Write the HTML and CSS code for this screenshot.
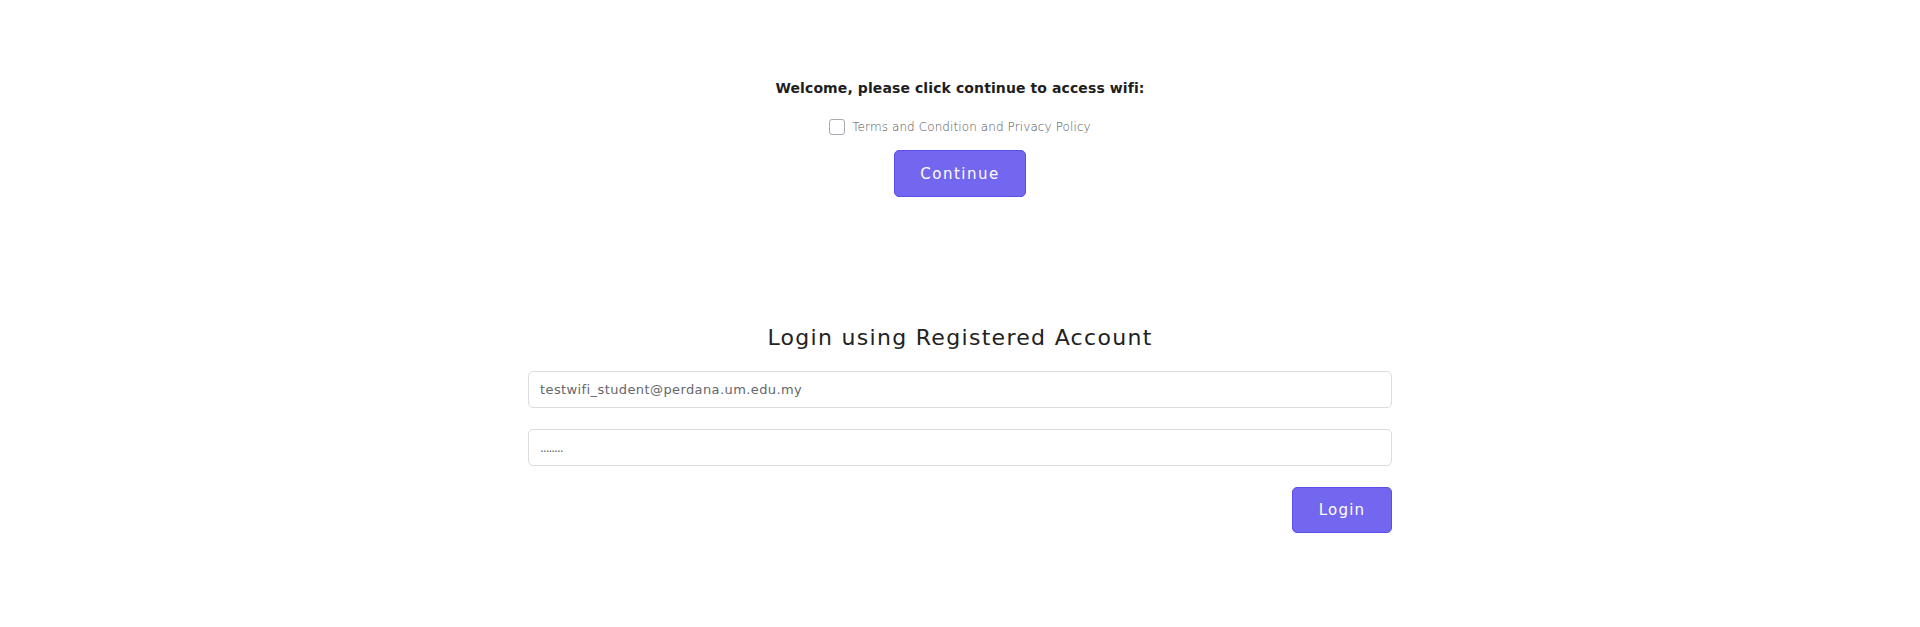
FILE: index.html
```html
<!DOCTYPE html>
<html lang="en">
<head>
<meta charset="utf-8">
<title>Wifi Login</title>
<link rel="stylesheet" href="styles.css">
</head>
<body>
<main class="page">
  <section class="welcome">
    <h4 class="welcome-title">Welcome, please click continue to access wifi:</h4>
    <label class="terms">
      <span class="check"></span>
      <span class="terms-text">Terms and Condition and Privacy Policy</span>
    </label>
    <button class="btn btn-continue" type="button">Continue</button>
  </section>
  <section class="login">
    <h3 class="login-title">Login using Registered Account</h3>
    <div class="field"><span class="field-text">testwifi_student@perdana.um.edu.my</span></div>
    <div class="field"><span class="field-dots">........</span></div>
    <div class="actions">
      <button class="btn btn-login" type="button">Login</button>
    </div>
  </section>
</main>
</body>
</html>
```

FILE: styles.css
```css
* { box-sizing: border-box; }
html, body { margin: 0; padding: 0; background: #ffffff; }
body {
  width: 1920px;
  height: 627px;
  overflow: hidden;
  font-family: "DejaVu Sans", "Noto Sans", sans-serif;
  color: #2b2b2b;
}
.page {
  display: flex;
  flex-direction: column;
  align-items: center;
}
.welcome {
  display: flex;
  flex-direction: column;
  align-items: center;
  padding-top: 78px;
}
.welcome-title {
  margin: 0;
  font-size: 14px;
  line-height: 20px;
  font-weight: 600;
  color: #1e1e1e;
  letter-spacing: 0.1px;
}
.terms {
  display: flex;
  align-items: center;
  gap: 7px;
  margin-top: 20px;
  height: 18px;
}
.check {
  width: 16px;
  height: 16px;
  border: 1px solid #a9a9b2;
  border-radius: 3px;
  background: #fff;
}
.terms-text {
  font-size: 12px;
  font-weight: 300;
  color: #4f4f57;
  letter-spacing: 0.1px;
}
.btn {
  font-family: inherit;
  background: #7367f0;
  border: 1px solid #5a4de8;
  border-radius: 5px;
  color: #ffffff;
  cursor: pointer;
}
.btn-continue {
  margin-top: 14px;
  width: 132px;
  height: 47px;
  font-size: 15px;
  letter-spacing: 1.5px;
}
.login {
  width: 864px;
  display: flex;
  flex-direction: column;
  margin-top: 126px;
}
.login-title {
  margin: 0 0 18px;
  text-align: center;
  font-size: 22px;
  line-height: 30px;
  font-weight: 500;
  color: #222222;
  letter-spacing: 1.3px;
}
.field {
  height: 37px;
  border: 1px solid #dcdce0;
  border-radius: 5px;
  display: flex;
  align-items: center;
  padding: 0 11px;
  margin-bottom: 21px;
}
.field-text {
  font-size: 13px;
  color: #66666e;
  letter-spacing: 0.4px;
}
.field-dots {
  font-size: 12px;
  color: #66666e;
  letter-spacing: -1px;
}
.actions {
  display: flex;
  justify-content: flex-end;
}
.btn-login {
  width: 100px;
  height: 46px;
  font-size: 15px;
  letter-spacing: 1.2px;
}
```
